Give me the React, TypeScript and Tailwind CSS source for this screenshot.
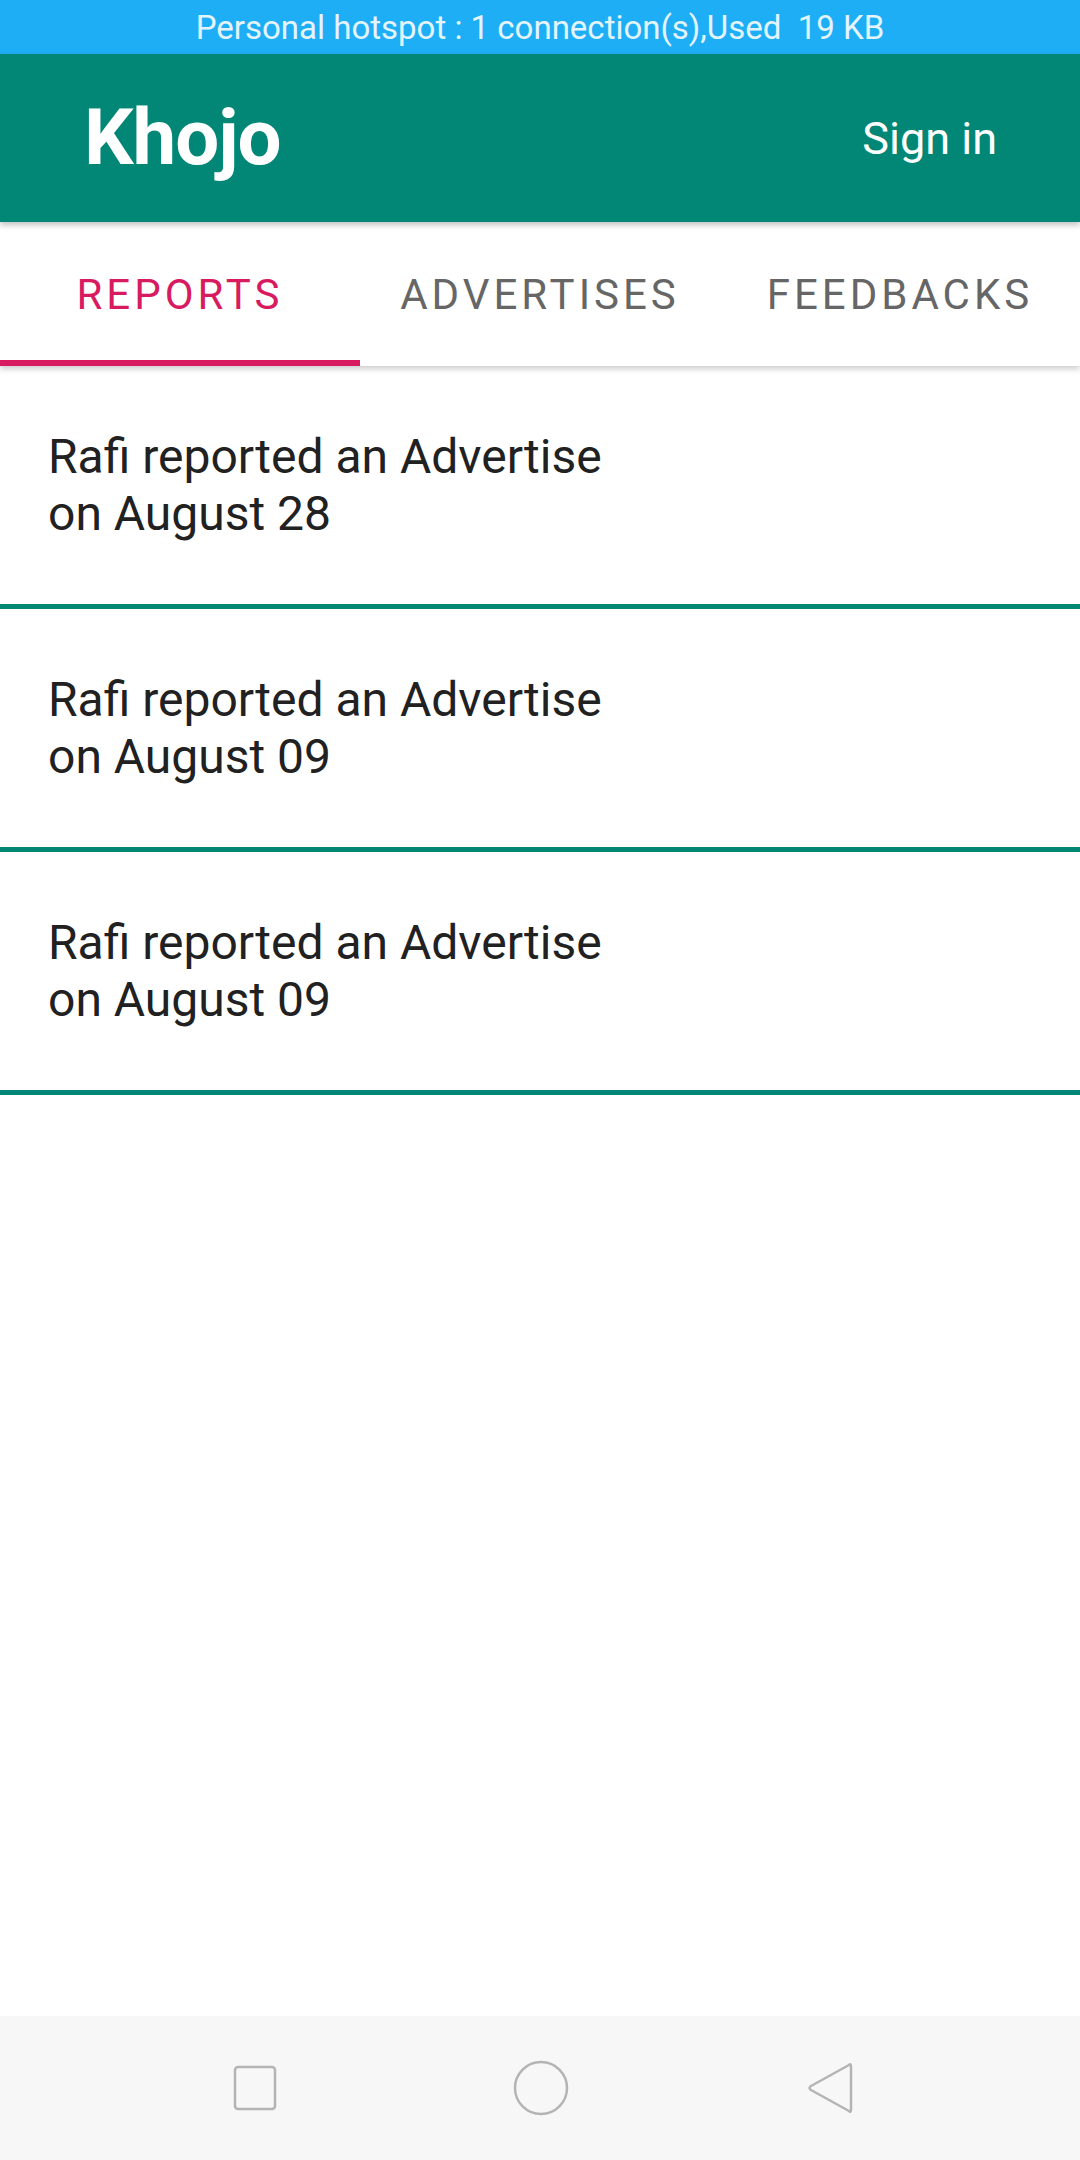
const REPORTS = [
  { who: 'Rafi', date: 'August 28' },
  { who: 'Rafi', date: 'August 09' },
  { who: 'Rafi', date: 'August 09' },
]

const TABS = ['REPORTS', 'ADVERTISES', 'FEEDBACKS']

export default function App() {
  return (
    <div className="w-[1080px] h-[2160px] flex flex-col bg-white font-['Roboto',sans-serif] overflow-hidden">
      {/* status bar */}
      <div className="h-[54px] bg-[#1eaef6] flex items-center justify-center">
        <span className="text-[33px] leading-none text-[#e3f4fd] whitespace-pre">
          Personal hotspot : 1 connection(s),Used  19 KB
        </span>
      </div>

      {/* app bar */}
      <div className="relative z-20 h-[168px] bg-[#028777] flex items-center justify-between pl-[84px] pr-[83px] shadow-[0_3px_6px_rgba(0,0,0,0.25)]">
        <span className="text-[78px] font-bold text-white tracking-[-1px] leading-none">Khojo</span>
        <span className="text-[45px] text-white leading-none">Sign in</span>
      </div>

      {/* tabs */}
      <div className="relative z-10 h-[144px] bg-white grid grid-cols-3 shadow-[0_3px_6px_rgba(0,0,0,0.2)]">
        {TABS.map((tab, i) => (
          <div key={tab} className="relative flex items-center justify-center pt-[2px]">
            <span
              className={
                i === 0
                  ? 'text-[42px] tracking-[4px] text-[#d81b60] leading-none'
                  : 'text-[42px] tracking-[4px] text-[#666666] leading-none'
              }
            >
              {tab}
            </span>
            {i === 0 && <div className="absolute left-0 right-0 bottom-0 h-[6px] bg-[#d81b60]" />}
          </div>
        ))}
      </div>

      {/* list */}
      <div className="flex-1 flex flex-col">
        {REPORTS.map((r, i) => (
          <div key={i} className="pl-[48px] py-[62px] border-b-[5px] border-[#028777]">
            <p className="text-[48px] leading-[57px] text-[#212121]">
              {r.who} reported an Advertise
              <br />
              on {r.date}
            </p>
          </div>
        ))}
      </div>

      {/* nav bar */}
      <div className="h-[144px] bg-[#f7f7f7] flex items-center justify-center gap-[234px] pl-[8px]">
        <svg width="46" height="46" viewBox="0 0 46 46">
          <rect x="3" y="2" width="40" height="42" rx="3" fill="none" stroke="#b4b4b4" strokeWidth="2.5" />
        </svg>
        <svg width="58" height="58" viewBox="0 0 58 58">
          <circle cx="29" cy="29" r="26" fill="none" stroke="#b4b4b4" strokeWidth="2.5" />
        </svg>
        <svg width="52" height="56" viewBox="0 0 52 56">
          <path
            d="M45 5 Q47 3 47 7 L47 49 Q47 53 45 51 L7 30 Q4 28 7 26 Z"
            fill="none"
            stroke="#b4b4b4"
            strokeWidth="2.5"
            strokeLinejoin="round"
          />
        </svg>
      </div>
    </div>
  )
}
